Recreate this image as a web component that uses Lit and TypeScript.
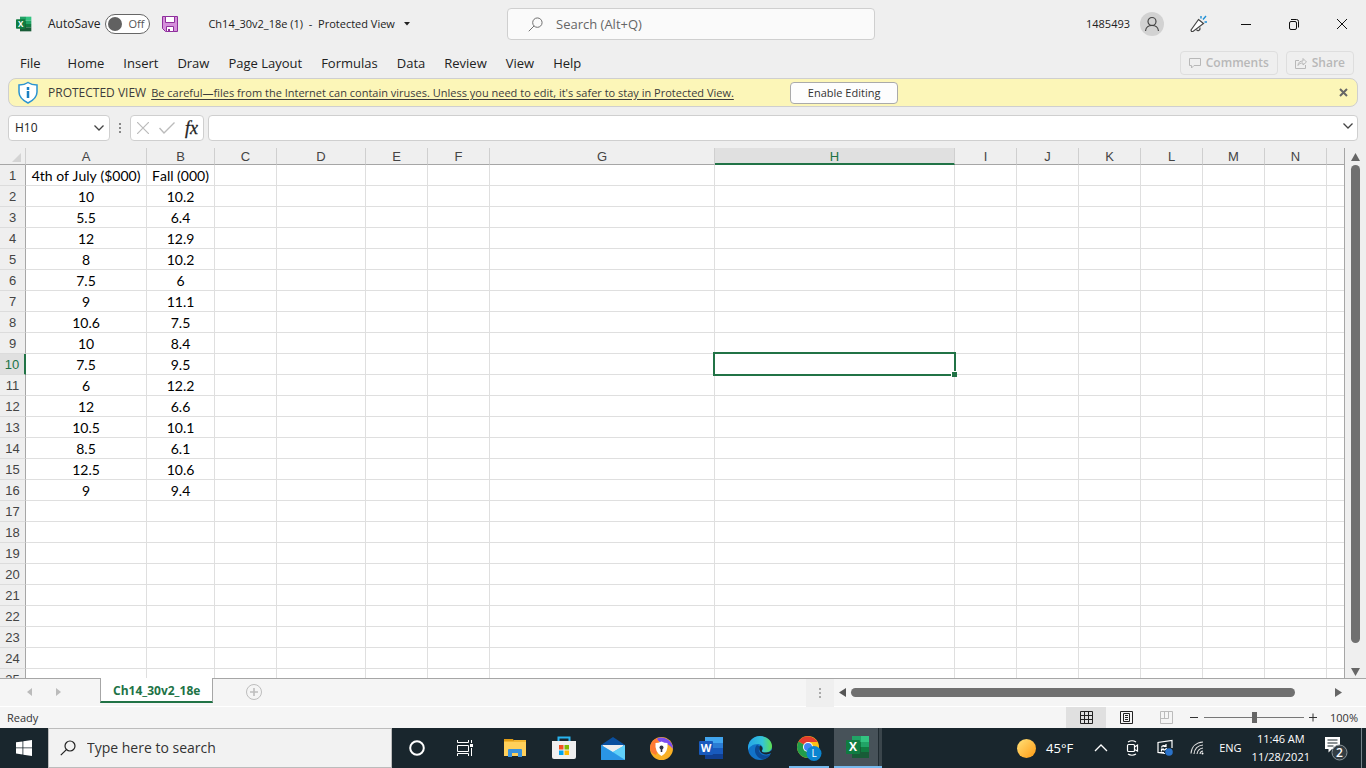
import { LitElement, html, css, nothing } from "lit";
import { customElement, state } from "lit/decorators.js";
import { classMap } from "lit/directives/class-map.js";

const COLUMNS: [string, number][] = [
  ["A", 121], ["B", 68], ["C", 62], ["D", 89], ["E", 62], ["F", 62], ["G", 225],
  ["H", 240], ["I", 62], ["J", 62], ["K", 62], ["L", 62], ["M", 62], ["N", 62],
];

const DATA: string[][] = [
  ["4th of July ($000)", "Fall (000)"],
  ["10", "10.2"], ["5.5", "6.4"], ["12", "12.9"], ["8", "10.2"], ["7.5", "6"],
  ["9", "11.1"], ["10.6", "7.5"], ["10", "8.4"], ["7.5", "9.5"], ["6", "12.2"],
  ["12", "6.6"], ["10.5", "10.1"], ["8.5", "6.1"], ["12.5", "10.6"], ["9", "9.4"],
];

const ROW_COUNT = 25;
const TABS = ["File", "Home", "Insert", "Draw", "Page Layout", "Formulas", "Data", "Review", "View", "Help"];

const excelLogo = (size: number) => html`
  <svg width=${size} height=${size} viewBox="0 0 24 24" aria-hidden="true">
    <path fill="#21a366" d="M6 1h9v6H6z" /><path fill="#33c481" d="M15 1h8v6h-8z" />
    <path fill="#107c41" d="M6 7h9v5H6z" /><path fill="#21a366" d="M15 7h8v5h-8z" />
    <path fill="#185c37" d="M6 12h9v11H6z" /><path fill="#107c41" d="M15 12h8v5h-8z" />
    <path fill="#185c37" d="M15 17h8v6h-8z" />
    <rect x="0" y="5" width="14" height="14" rx="1" fill="#107c41" />
    <text x="7" y="16" text-anchor="middle" font-size="12" font-weight="700" fill="#fff">X</text>
  </svg>`;

const magnifier = (size: number, width: number) => html`
  <svg width=${size} height=${size} viewBox="0 0 16 16" fill="none" stroke="currentColor" stroke-width=${width} aria-hidden="true">
    <circle cx="10" cy="6" r="5" /><path d="M6.4 9.6L.8 15.2" />
  </svg>`;

const base = css`
  :host, * { box-sizing: border-box; }
  svg { display: block; flex: none; }
  button, input {
    font: inherit; color: inherit; margin: 0; padding: 0; border: 0;
    background: none; outline: none; border-radius: 0;
  }
  button { display: flex; align-items: center; justify-content: center; white-space: nowrap; }
`;

@customElement("title-bar")
class TitleBar extends LitElement {
  static styles = [base, css`
    :host { display: flex; height: 48px; padding-left: 16px; align-items: center; font-size: 12px; }
    .side { flex: 1 1 0; display: flex; align-items: center; height: 100%; white-space: nowrap; }
    .right { justify-content: flex-end; font-size: 11px; }
    .autosave { display: flex; align-items: center; gap: 5px; margin: 0 12px 0 16px; }
    .toggle {
      width: 45px; height: 20px; border: 1px solid #666; border-radius: 10px; background: #fff;
      justify-content: flex-start; gap: 6px; padding-left: 2px; color: #555; font-size: 11px;
    }
    .knob { width: 14px; height: 14px; border-radius: 50%; background: #616161; }
    .doc { margin-left: 30px; gap: 9px; font-size: 11px; white-space: pre; }
    .search {
      flex: 0 1 368px; height: 32px; display: flex; align-items: center; gap: 13px; padding: 0 20px;
      border: 1px solid #cfcfcf; border-radius: 4px; background: #fafafa; color: #666; font-size: 13px;
    }
    .search input { flex: 1; min-width: 0; }
    .search input::placeholder { color: #666; opacity: 1; }
    .avatar { width: 24px; height: 24px; border-radius: 50%; background: #d2d2d2; margin: 0 10px; }
    .win { width: 48px; height: 48px; }
  `];

  render() {
    return html`
      <div class="side">
        ${excelLogo(16)}
        <label class="autosave">AutoSave
          <button class="toggle" role="switch" aria-checked="false"><span class="knob"></span>Off</button>
        </label>
        <button aria-label="Save">
          <svg width="16" height="16" viewBox="0 0 16 16">
            <path d="M.5.5h15v15H3.5l-3-3z" fill="#d58fdb" stroke="#8f2f9c" />
            <path d="M3.5.5h9v6h-9zM4.5 10.5h7v5h-7z" fill="#fff" stroke="#8f2f9c" />
            <path d="M6 13h2v2H6z" fill="#8f2f9c" />
          </svg>
        </button>
        <button class="doc"><span>Ch14_30v2_18e (1)  -  Protected View</span><svg width="6" height="4" viewBox="0 0 6 4"><path d="M0 0h6L3 3.5z" fill="#222" /></svg></button>
      </div>
      <label class="search">${magnifier(15, 1)}
        <input type="text" placeholder="Search (Alt+Q)" aria-label="Search" />
      </label>
      <div class="side right">
        <span>1485493</span>
        <button class="avatar" aria-label="Account">
          <svg width="16" height="16" viewBox="0 0 16 16" fill="none" stroke="#444" stroke-width="1.2">
            <circle cx="8" cy="5.5" r="4" /><path d="M1.5 15c.5-7.500 12.500-7.500 13 0" />
          </svg>
        </button>
        <button class="win" aria-label="What's new">
          <svg width="18" height="18" viewBox="0 0 18 18" fill="none" stroke="#444" stroke-width="1.2">
            <path d="M9.5 4.5l5 4L4 16.500H2.500L2 15z" fill="#fff" /><path d="M7.500 14.500c1 2 4 1.500 3.500-2" />
            <path d="M12 3.500V1M14 4.500l3-3.500M15.500 7H18" stroke="#1e8fd5" stroke-width="1.400" />
          </svg>
        </button>
        <button class="win" aria-label="Minimize">
          <svg width="10" height="11" viewBox="0 0 10 11"><path d="M0 5.500h10" stroke="#111" /></svg>
        </button>
        <button class="win" aria-label="Restore">
          <svg width="10" height="11" viewBox="0 0 10 11" fill="none" stroke="#111">
            <rect x=".5" y="2.500" width="7" height="8" rx="1.500" /><path d="M2 .5h5.500q2 0 2 2v6" />
          </svg>
        </button>
        <button class="win" aria-label="Close">
          <svg width="10" height="10" viewBox="0 0 10 10" stroke="#111"><path d="M0 0l10 10M10 0L0 10" /></svg>
        </button>
      </div>`;
  }
}

@customElement("ribbon-tabs")
class RibbonTabs extends LitElement {
  static styles = [base, css`
    :host { display: flex; height: 30px; align-items: center; justify-content: space-between; padding: 0 12px 0 11px; font-size: 13px; }
    nav, .actions { display: flex; align-items: center; }
    .tab { padding: 0 10px 0 9px; height: 30px; }
    .tab:first-child { margin-right: 8px; }
    .actions { gap: 8px; font-size: 12px; }
    .action {
      height: 24px; gap: 5px; padding: 0 8px; border: 1px solid #dedede; border-radius: 4px;
      color: #b8b8b8; font-weight: 600;
    }
  `];

  render() {
    return html`
      <nav>${TABS.map((t) => html`<button class="tab">${t}</button>`)}</nav>
      <div class="actions">
        <button class="action">
          <svg width="12" height="12" viewBox="0 0 12 12" fill="none" stroke="#b8b8b8"><path d="M.5 1.500h11v7H5l-2.500 2.500V8.500h-2z" /></svg>
          Comments
        </button>
        <button class="action">
          <svg width="12" height="12" viewBox="0 0 12 12" fill="none" stroke="#b8b8b8">
            <path d="M4 3.500H.5v8h10V8M3 8.500c0-3 2-4.500 5-4.500V1.500L11.500 5 8 8V6C5.500 6 4 6.500 3 8.500z" />
          </svg>
          Share
        </button>
      </div>`;
  }
}

@customElement("protected-banner")
class ProtectedBanner extends LitElement {
  static styles = [base, css`
    :host {
      display: flex; align-items: center; height: 29px; margin: 0 8px; padding: 0 8px; font-size: 11px;
      border: 1px solid #cfcfcf; border-radius: 8px; background: #fcf6b8; color: #3c3c3c; white-space: nowrap;
    }
    .title { margin: 0 5px 0 9px; font-size: 12px; }
    a { color: inherit; text-underline-offset: 2px; }
    .enable { height: 22px; margin-left: 56px; padding: 0 17px; border: 1px solid #aaa; border-radius: 4px; background: #fdfdfd; color: #333; }
    .close { margin-left: auto; width: 12px; height: 12px; }
  `];

  render() {
    return html`
      <svg width="22" height="23" viewBox="0 0 22 23">
        <path d="M11 1.500c2.500 1.800 5.500 2.500 9 2.500v7c0 5-4 8.500-9 11C6 19.500 2 16 2 11V4c3.500 0 6.500-.7 9-2.500z" fill="#fff" stroke="#2b93d1" stroke-width="1.500" />
        <path d="M11 6v3M11 10v7" stroke="#1a7fc1" stroke-width="2.500" />
      </svg>
      <span class="title">PROTECTED VIEW</span>
      <a href="#protected">Be careful—files from the Internet can contain viruses. Unless you need to edit, it's safer to stay in Protected View.</a>
      <button class="enable">Enable Editing</button>
      <button class="close" aria-label="Close banner">
        <svg width="9" height="9" viewBox="0 0 9 9" stroke="#666" stroke-width="2"><path d="M1 1l7 7M8 1L1 8" /></svg>
      </button>`;
  }
}

@customElement("formula-bar")
class FormulaBar extends LitElement {
  static styles = [base, css`
    :host { display: flex; margin: 8px 8px 7px; height: 26px; font-size: 12px; }
    .box { display: flex; align-items: center; border: 1px solid #cfcfcf; border-radius: 4px; background: #fff; }
    .name { width: 102px; padding: 0 5px 0 6px; }
    .name input { flex: 1; min-width: 0; }
    .dots { width: 20px; display: flex; align-items: center; justify-content: center; }
    .tools { width: 74px; margin-right: 4px; padding: 0 5px 0 6px; justify-content: space-between; }
    .fx { font: italic 18px/20px "Liberation Serif", serif; color: #222; -webkit-text-stroke: .3px #222; }
    .entry { flex: 1; padding: 0 4px 4px 6px; }
    .entry input { flex: 1; min-width: 0; }
  `];

  render() {
    const chevron = html`<svg width="10" height="6" viewBox="0 0 10 6" fill="none" stroke="#444" stroke-width="1.300"><path d="M.5.5L5 5 9.500.5" /></svg>`;
    return html`
      <div class="box name">
        <input type="text" .value=${"H10"} aria-label="Name box" />
        <button aria-label="Cell names">${chevron}</button>
      </div>
      <div class="dots">
        <svg width="2" height="10" viewBox="0 0 2 10" fill="#888"><path d="M0 0h2v2H0zM0 4h2v2H0zM0 8h2v2H0z" /></svg>
      </div>
      <div class="box tools">
        <button aria-label="Cancel"><svg width="12" height="12" viewBox="0 0 12 12" stroke="#bbb" stroke-width="1.200"><path d="M0 0l12 12M12 0L0 12" /></svg></button>
        <button aria-label="Enter"><svg width="16" height="12" viewBox="0 0 16 12" fill="none" stroke="#bbb" stroke-width="1.400"><path d="M.5 6L5 11 15.500.5" /></svg></button>
        <button class="fx" aria-label="Insert function">fx</button>
      </div>
      <div class="box entry">
        <input type="text" aria-label="Formula" />
        <button aria-label="Expand formula bar">${chevron}</button>
      </div>`;
  }
}

@customElement("sheet-grid")
class SheetGrid extends LitElement {
  @state() private selectedColumn = "H";
  @state() private selectedRow = 10;

  static styles = [base, css`
    :host { display: flex; min-height: 0; flex: 1; }
    .view { flex: 1; min-width: 0; overflow: hidden; border-right: 1px solid #a6a6a6; }
    table { width: 100%; table-layout: fixed; border-collapse: separate; border-spacing: 0; background: #fff; }
    col.rows { width: 26px; }
    th {
      padding: 2px 0 0; overflow: hidden; background: #efefef; color: #444; font: 400 13px/18px "Liberation Sans", sans-serif;
      border-right: 1px solid #a6a6a6; border-bottom: 1px solid #dcdcdc; text-align: center;
    }
    thead th { height: 17px; line-height: 14px; border-bottom-color: #a6a6a6; border-right-color: #cfcfcf; }
    thead th.on { background: #e0e0e0; color: #217346; border-bottom: 2px solid #217346; line-height: 13px; }
    tbody th.on { background: #e0e0e0; color: #217346; border-right: 2px solid #217346; }
    thead svg { margin: 0 4px 0 auto; }
    td {
      height: 21px; padding: 2px 0 0; border-right: 1px solid #dfdfdf; border-bottom: 1px solid #dfdfdf;
      font: 14px/18px Lato, sans-serif; font-kerning: none; color: #000; text-align: center; white-space: nowrap;
    }
    td:last-child, thead th:last-child { border-right: 0; }
    td.on { position: relative; }
    .cursor { position: absolute; inset: -2px; border: 2px solid #217346; }
    .handle { position: absolute; right: -3px; bottom: -3px; width: 6px; height: 6px; background: #217346; border: solid #fff; border-width: 1px 0 0 1px; }
    .bar { width: 21px; display: flex; flex-direction: column; align-items: center; padding: 5px 0 2px; }
    .thumb { flex: 1; width: 9px; border-radius: 5px; background: #707070; margin: 4px 0 25px; }
  `];

  render() {
    const rows = Array.from({ length: ROW_COUNT }, (_, i) => i + 1);
    return html`
      <div class="view">
        <table>
          <colgroup>
            <col class="rows" />
            ${COLUMNS.map(([, w]) => html`<col style="width:${w}px" />`)}
            <col />
          </colgroup>
          <thead>
            <tr>
              <th><svg width="10" height="10" viewBox="0 0 10 10"><path d="M10 1v9H1z" fill="#d4d4d4" /></svg></th>
              ${COLUMNS.map(([name]) => html`<th class=${classMap({ on: name === this.selectedColumn })}>${name}</th>`)}
              <th></th>
            </tr>
          </thead>
          <tbody>
            ${rows.map((r) => html`<tr>
              <th class=${classMap({ on: r === this.selectedRow })}>${r}</th>
              ${[...COLUMNS.map(([n]) => n), ""].map((name, c) => {
                const on = r === this.selectedRow && name === this.selectedColumn;
                return html`<td class=${classMap({ on })}>${DATA[r - 1]?.[c] ?? nothing}${on
                  ? html`<div class="cursor"><div class="handle"></div></div>` : nothing}</td>`;
              })}
            </tr>`)}
          </tbody>
        </table>
      </div>
      <div class="bar">
        <svg width="9" height="8" viewBox="0 0 9 8"><path d="M4.500 0L9 8H0z" fill="#666" /></svg>
        <div class="thumb"></div>
        <svg width="9" height="8" viewBox="0 0 9 8"><path d="M4.500 8L9 0H0z" fill="#666" /></svg>
      </div>`;
  }
}

@customElement("sheet-footer")
class SheetFooter extends LitElement {
  static styles = [base, css`
    :host { display: block; background: #f5f5f5; font-size: 12px; }
    .tabs { display: flex; height: 29px; border-bottom: 1px solid #fff; }
    .lead, .rest { border-top: 1px solid #a6a6a6; display: flex; align-items: center; }
    .lead { width: 100px; padding: 0 39px 2px 27px; justify-content: space-between; }
    .rest { flex: 1; padding-left: 33px; }
    .add { margin-bottom: 2px; }
    .sheet {
      height: 25px; padding: 3px 12px 0; background: #fff; border: solid #a6a6a6; border-width: 0 1px 0;
      border-bottom: 2px solid #217346; color: #217346; font-weight: 700;
    }
    .scroll { margin-left: auto; width: 560px; height: 28px; display: flex; align-items: center; }
    .grip { width: 28px; height: 100%; background: #efefef; display: flex; align-items: center; justify-content: center; margin-right: 5px; }
    .thumb { width: 444px; height: 9px; border-radius: 5px; background: #707070; margin: 0 40px 0 5px; }
    .status { display: flex; height: 21px; align-items: center; padding: 0 8px 0 7px; font-size: 11px; color: #333; }
    .views { display: flex; margin-left: auto; height: 100%; }
    .mode { width: 40px; }
    .mode.on { background: #e0e0e0; }
    .zoom { display: flex; align-items: center; gap: 5px; margin: 0 12px 0 4px; }
    input[type="range"] { appearance: none; width: 100px; height: 12px; background: linear-gradient(#777, #777) center / 100% 1px no-repeat; }
    input[type="range"]::-webkit-slider-thumb { appearance: none; width: 5px; height: 11px; background: #666; }
  `];

  render() {
    return html`
      <div class="tabs">
        <div class="lead">
          <button aria-label="Previous sheet"><svg width="5" height="8" viewBox="0 0 5 8"><path d="M5 0v8L0 4z" fill="#bbb" /></svg></button>
          <button aria-label="Next sheet"><svg width="5" height="8" viewBox="0 0 5 8"><path d="M0 0v8l5-4z" fill="#bbb" /></svg></button>
        </div>
        <button class="sheet">Ch14_30v2_18e</button>
        <div class="rest">
          <button class="add" aria-label="New sheet">
            <svg width="16" height="16" viewBox="0 0 16 16" fill="none" stroke="#bdbdbd"><circle cx="8" cy="8" r="7.500" /><path d="M4 8h8M8 4v8" stroke-width="1.600" /></svg>
          </button>
          <div class="scroll">
            <div class="grip"><svg width="2" height="10" viewBox="0 0 2 10" fill="#aaa"><path d="M0 0h2v2H0zM0 4h2v2H0zM0 8h2v2H0z" /></svg></div>
            <svg width="7" height="9" viewBox="0 0 7 9"><path d="M7 0v9L0 4.500z" fill="#555" /></svg>
            <div class="thumb"></div>
            <svg width="7" height="9" viewBox="0 0 7 9"><path d="M0 0v9l7-4.500z" fill="#666" /></svg>
          </div>
        </div>
      </div>
      <div class="status">
        <span>Ready</span>
        <div class="views">
          <button class="mode on" aria-label="Normal"><svg width="13" height="13" viewBox="0 0 13 13" fill="none" stroke="#222"><path d="M.5.5h12v12H.5zM4.500.5v12M8.500.5v12M.5 4.500h12M.5 8.500h12" /></svg></button>
          <button class="mode" aria-label="Page layout"><svg width="13" height="13" viewBox="0 0 13 13" fill="none" stroke="#222"><path d="M.5.5h12v12H.5zM3.500 2.500h6v8h-6zM5 4.500h3M5 6.500h3M5 8.500h3" /></svg></button>
          <button class="mode" aria-label="Page break preview"><svg width="13" height="13" viewBox="0 0 13 13" fill="none" stroke="#bbb"><path d="M.5.5h12v12H.5zM4.500.5v7M8.500.5v7M.5 7.500h8" /></svg></button>
        </div>
        <div class="zoom">
          <button aria-label="Zoom out"><svg width="9" height="9" viewBox="0 0 9 9" stroke="#333"><path d="M0 4.500h8" /></svg></button>
          <input type="range" min="0" max="100" .value=${"50"} aria-label="Zoom" />
          <button aria-label="Zoom in"><svg width="9" height="9" viewBox="0 0 9 9" stroke="#333"><path d="M0 4.500h8M4 .5v8" /></svg></button>
        </div>
        <span>100%</span>
      </div>`;
  }
}

const wordLogo = html`
  <svg width="24" height="24" viewBox="0 0 24 24">
    <path fill="#41a5ee" d="M6 1h18v6H6z" /><path fill="#2b7cd3" d="M6 7h18v5H6z" />
    <path fill="#185abd" d="M6 12h18v6H6z" /><path fill="#103f91" d="M6 18h18v5H6z" />
    <rect y="5" width="14" height="14" rx="1" fill="#185abd" />
    <text x="7" y="16" text-anchor="middle" font-size="11" font-weight="700" fill="#fff">W</text>
  </svg>`;

const APPS = [
  { name: "Cortana", art: html`<svg width="16" height="16" viewBox="0 0 16 16"><circle cx="8" cy="8" r="6.800" fill="none" stroke="#fff" stroke-width="2" /></svg>` },
  { name: "Task View", art: html`<svg width="17" height="16" viewBox="0 0 17 16" fill="none" stroke="#fff"><path d="M.5 0v2.500h11V0M.5 5.500h11v6H.5zM.5 16v-2.500h11V16M14.500 0v3M14.500 8v8" /><path d="M13 4h3v3h-3z" fill="#fff" stroke="none" /></svg>` },
  { name: "File Explorer", art: html`<svg width="22" height="18" viewBox="0 0 22 18"><path d="M0 0h9l1 2H0z" fill="#e19c15" /><path d="M0 2h22v15H0z" fill="#ffd05a" /><path d="M0 2h9l1-1h12v2H0z" fill="#f2b632" /><path d="M4 18v-7q0-1 1-1h12q1 0 1 1v7h-4v-4H8v4z" fill="#3a92dc" /></svg>` },
  { name: "Store", art: html`<svg width="24" height="24" viewBox="0 0 24 24"><path d="M6.500 6V1.500h11V6" fill="none" stroke="#28b4f0" stroke-width="2" /><path d="M0 5h24v16q0 2-2 2H2q-2 0-2-2z" fill="#efefef" /><path d="M7 9h4.500v4.500H7z" fill="#f25022" /><path d="M12.500 9H17v4.500h-4.500z" fill="#7fba00" /><path d="M7 14.500h4.500V19H7z" fill="#00a4ef" /><path d="M12.500 14.500H17V19h-4.500z" fill="#ffb900" /></svg>` },
  { name: "Mail", art: html`<svg width="24" height="23" viewBox="0 0 24 23"><path d="M0 8l12-8 12 8v4H0z" fill="#0a4f9e" /><path d="M1.500 8h21v2L12 16 1.500 10z" fill="#eee" /><path d="M0 8l12 7 12-7v14q0 1-1 1H1q-1 0-1-1z" fill="#3cb8f0" /><path d="M24 8L12 15l12 8z" fill="#5fd0fa" /><path d="M0 8l24 15H1q-1 0-1-1z" fill="#2a95e5" /></svg>` },
  { name: "Secure Browser", art: html`<svg width="23" height="23" viewBox="0 0 23 23"><circle cx="11.500" cy="11.500" r="11.500" fill="#f9b024" /><path d="M6 2a11.500 11.500 0 0 1 17 10q-4-6-12-6z" fill="#7b4df0" /><path d="M0 11A11.500 11.500 0 0 1 7 1l3 8-4 9q-6-2-6-7z" fill="#ff7a33" /><path d="M11.500 4.500q3 1.500 6 1.500 1 9-6 13-7-4-6-13 3 0 6-1.500z" fill="#fff" /><circle cx="11.500" cy="10.500" r="2" fill="#334" /><path d="M10.700 11h1.600v4h-1.600z" fill="#334" /></svg>` },
  { name: "Word", art: wordLogo },
  { name: "Edge", art: html`<svg width="24" height="24" viewBox="0 0 24 24">
      <defs><linearGradient id="top" x1="0" x2="1"><stop offset="0" stop-color="#25a5e8" /><stop offset=".6" stop-color="#35c4d8" /><stop offset="1" stop-color="#5fe04e" /></linearGradient></defs>
      <circle cx="12" cy="12" r="12" fill="#1273c8" />
      <path d="M0 11C1 4 6 0 12 0c7 0 12 5 12 10 0 4-3 6.500-6.500 6.500-2.500 0-4-1-3.300-2.200C16 12 14 8 9.500 8 5 8 1 11 .2 14q-.3-1.500-.2-3z" fill="url(#top)" />
      <path d="M9 9c-4 4-2 12 5 14 4 .5 7-2 8.500-4.500-4 2-10 1-11.500-3.500-.5-2 .5-3.500 1-4.500z" fill="#0c4a95" />
      <path d="M12.500 9.500c-2 2-1.500 6 2 8 3 1.500 6 1 8.500-.5l1.500 2L24 14q-3 3-7 2.500c-2.500 0-3.700-1-3-2.200 1-1.500.5-3.500-1.500-4.800z" fill="#19262d" />
    </svg>` },
  { name: "Chrome", running: true, art: html`<svg width="25" height="25" viewBox="0 0 25 25"><circle cx="11" cy="11" r="11" fill="#fbc116" /><path d="M11 11L1.500 5.500A11 11 0 0 1 20.500 6H11z" fill="#e33b2e" /><path d="M1.500 5.500A11 11 0 0 0 11 22l5-8-5-3z" fill="#229d4b" /><circle cx="11" cy="11" r="5" fill="#fff" /><circle cx="11" cy="11" r="4" fill="#4285f4" /><circle cx="17" cy="17.500" r="7.500" fill="#0b84d0" /><text x="17" y="21" text-anchor="middle" font-size="10" fill="#fff">L</text></svg>` },
  { name: "Excel", running: true, active: true, art: excelLogo(24) },
];

@customElement("task-bar")
class TaskBar extends LitElement {
  static styles = [base, css`
    :host { display: flex; height: 40px; background: #19262d; color: #fff; font-size: 11px; line-height: 18px; }
    .start { width: 48px; }
    .search {
      flex: 0 1 344px; display: flex; align-items: center; gap: 11px; padding: 0 11px;
      background: #f2f2f2; border: 1px solid #bcbcbc; color: #222; font-size: 14px;
    }
    .search input { flex: 1; min-width: 0; }
    .search input::placeholder { color: #333; opacity: 1; }
    .apps { display: flex; }
    .app { width: 49px; border: solid transparent; border-width: 2px 0; }
    .app.running { width: 40px; margin: 0 5px; border-bottom-color: #76b9ed; }
    .app.active { width: 48px; margin: 0; background: linear-gradient(90deg, #475259 44px, #1f2a30 44px, #1f2a30 45px, #3a454b 45px) border-box; border-width: 0 0 2px; }
    .tray { display: flex; align-items: center; margin-left: auto; height: 100%; padding-right: 4px; white-space: nowrap; }
    .weather { gap: 10px; font-size: 13px; margin-right: 21px; }
    .icons { display: flex; align-items: center; gap: 16px; margin-right: 13px; }
    .clock { text-align: center; margin: 0 14px 0 10px; display: block; }
    .clock time { display: block; }
    .edge { width: 1px; height: 100%; background: #76838a; margin-left: 12px; }
    .sun { width: 19px; height: 19px; border-radius: 50%; background: linear-gradient(135deg, #ffe27a, #ff9a12); }
  `];

  render() {
    return html`
      <button class="start" aria-label="Start">
        <svg width="16" height="16" viewBox="0 0 16 16" fill="#fff"><path d="M0 2.300L6.500 1.400v6.100H0zM7.300 1.300L16 0v7.500H7.300zM0 8.300h6.500v6.200L0 13.600zM7.300 8.300H16V16l-8.700-1.300z" /></svg>
      </button>
      <label class="search">${magnifier(16, 1.2)}
        <input type="text" placeholder="Type here to search" aria-label="Type here to search" />
      </label>
      <div class="apps">
        ${APPS.map((a) => html`<button class=${classMap({ app: true, running: !!a.running, active: !!a.active })} aria-label=${a.name}>${a.art}</button>`)}
      </div>
      <div class="tray">
        <button class="weather"><span class="sun"></span>45°F</button>
        <div class="icons">
          <svg width="14" height="8" viewBox="0 0 14 8" fill="none" stroke="#fff" stroke-width="1.300"><path d="M1 7l6-6 6 6" /></svg>
          <svg width="16" height="18" viewBox="0 0 16 18" fill="none" stroke="#fff" stroke-width="1.200"><rect x="3.500" y="5.500" width="7" height="7" rx="1" /><path d="M10.500 8L13.500 6v6l-3-1.500M4 3q4-2.500 8 0M4 15q4 2.500 8 0" /></svg>
          <svg width="18" height="18" viewBox="0 0 18 18" fill="none" stroke="#fff" stroke-width="1.200"><path d="M9 14.500l-7-1v-10l14-2V9M2 13.500h6" /><path d="M5.500 8.500c.5-2 3-2.500 4.500-1M10 5v2.500H7.500M10.500 9c-.5 2-3 2.500-4.500 1M5.500 12.500V10H8" /><circle cx="13" cy="13" r="3.800" fill="#2a72c9" stroke="none" /></svg>
          <svg width="16" height="14" viewBox="0 0 16 14" fill="none" stroke="#ddd" stroke-width="1.100"><path d="M1 12.500C1.500 6 6 1.500 13 1M4 13c.5-5 4-8.500 9-9M7 13c.5-3.500 2.500-5.500 6-6M10 13c.2-1.800 1.200-2.800 3-3" /><circle cx="12.500" cy="12.500" r="1" fill="#fff" stroke="none" /></svg>
        </div>
        <span>ENG</span>
        <button class="clock"><time>11:46 AM</time><time>11/28/2021</time></button>
        <svg width="25" height="26" viewBox="0 0 25 26">
          <path d="M1 2h15v12H8l-3.500 3.500V14H1z" fill="#fff" /><path d="M3.500 5h10M3.500 8h10M3.500 11h6" stroke="#19262d" stroke-width="1.200" />
          <circle cx="15.500" cy="17.500" r="7.500" fill="#333d43" stroke="#8c969b" />
          <text x="15.500" y="22" text-anchor="middle" font-size="12" font-weight="600" fill="#fff">2</text>
        </svg>
        <div class="edge"></div>
      </div>`;
  }
}

@customElement("app-root")
class AppRoot extends LitElement {
  static styles = css`
    :host {
      display: flex; flex-direction: column; height: 100vh; overflow: hidden;
      background: #efefef; color: #222; font: 12px/16px "Open Sans", "Noto Sans", sans-serif;
    }
  `;

  render() {
    return html`
      <title-bar></title-bar>
      <ribbon-tabs></ribbon-tabs>
      <protected-banner></protected-banner>
      <formula-bar></formula-bar>
      <sheet-grid></sheet-grid>
      <sheet-footer></sheet-footer>
      <task-bar></task-bar>`;
  }
}
